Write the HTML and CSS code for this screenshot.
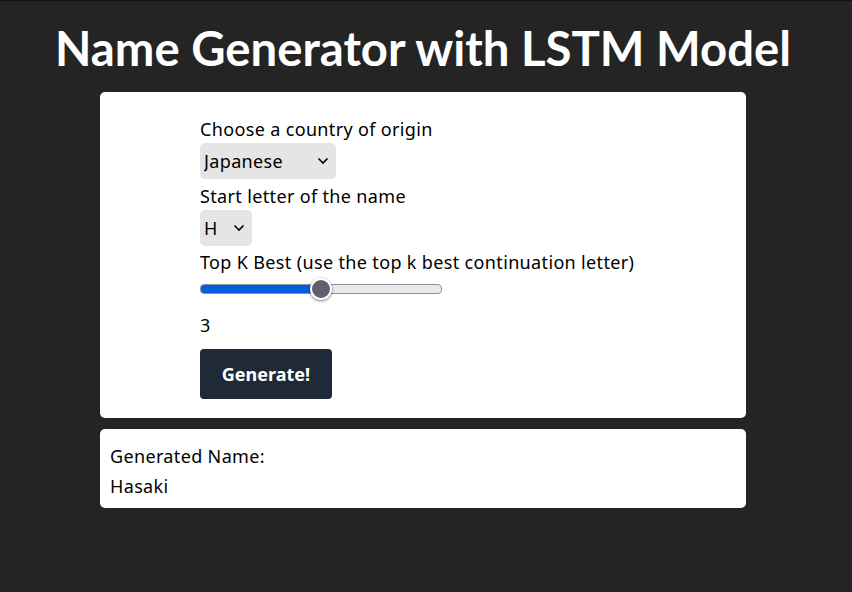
FILE: index.html
```html
<!DOCTYPE html>
<html lang="en">
  <head>
    <meta charset="UTF-8" />
    <meta name="viewport" content="width=device-width, initial-scale=1.0" />
    <title>Name Generator</title>
    <link rel="stylesheet" href="styles.css">
  </head>
  <body>
    <h1 class="title">Name Generator with LSTM Model</h1>

    <div class="card">
      <form class="form" onsubmit="event.preventDefault()">
        <label for="country">Choose a country of origin</label>
        <select id="country" class="select">
          <option>Japanese</option>
        </select>

        <label for="letter">Start letter of the name</label>
        <select id="letter" class="select select-small">
          <option>H</option>
        </select>

        <label for="topk">Top K Best (use the top k best continuation letter)</label>
        <input type="range" id="topk" class="slider" min="1" max="5" value="3" />
        <p class="value">3</p>

        <button type="submit" class="generate">Generate!</button>
      </form>
    </div>

    <div class="card result">
      <p>Generated Name:</p>
      <p>Hasaki</p>
    </div>
  </body>
</html>
```

FILE: styles.css
```css
body {
  font-family: "Noto Sans", sans-serif;
  background-color: #242424;
  border-top: 1px solid #111;
  margin: 0;
  min-height: 100vh;
  padding: 0 106px 0 100px;
  box-sizing: border-box;
}

.title {
  font-family: "Lato", sans-serif;
  color: #fff;
  font-size: 47.3px;
  font-weight: 700;
  text-align: center;
  white-space: nowrap;
  margin: 0 -100px;
  padding: 23px 0 21px;
  line-height: 47px;
}

.card {
  background: #fff;
  border-radius: 5px;
  color: #000;
  font-size: 18px;
  line-height: 28px;
  letter-spacing: 0.35px;
}

.form {
  display: flex;
  flex-direction: column;
  align-items: flex-start;
  padding: 23px 100px 19px;
}

.select {
  appearance: none;
  font: inherit;
  letter-spacing: inherit;
  background: #e5e5e5 url("data:image/svg+xml;utf8,<svg xmlns='http://www.w3.org/2000/svg' width='12' height='8' viewBox='0 0 12 8'><path d='M1.5 1.5 6 6l4.5-4.5' fill='none' stroke='black' stroke-width='1.6'/></svg>") no-repeat right 7px center;
  border: none;
  border-radius: 5px;
  height: 36px;
  width: 136px;
  padding: 0 4px;
  margin-bottom: 3px;
  color: #000;
}

.select-small {
  width: 52px;
  margin-bottom: 2px;
}

.slider {
  appearance: none;
  width: 240px;
  height: 8px;
  margin: 8px 0 0;
  border-radius: 4px;
  border: 1px solid #8f8f9d;
  background: linear-gradient(to right, #0060df 50%, #e9e9ed 50%);
}

.slider::-webkit-slider-thumb {
  appearance: none;
  width: 22px;
  height: 22px;
  border-radius: 50%;
  background: #5f5f6d;
  border: 2px solid #fff;
  box-shadow: 0 1px 3px rgba(0, 0, 0, 0.5);
}

.value {
  margin: 17px 0 10px;
}

.generate {
  background: #1f2937;
  color: #fff;
  font: inherit;
  font-weight: 700;
  border: none;
  border-radius: 4px;
  width: 132px;
  height: 50px;
  cursor: pointer;
}

.result {
  margin-top: 11px;
  padding: 12px 10px 7px;
  line-height: 30px;
}

.result p {
  margin: 0;
}
```
